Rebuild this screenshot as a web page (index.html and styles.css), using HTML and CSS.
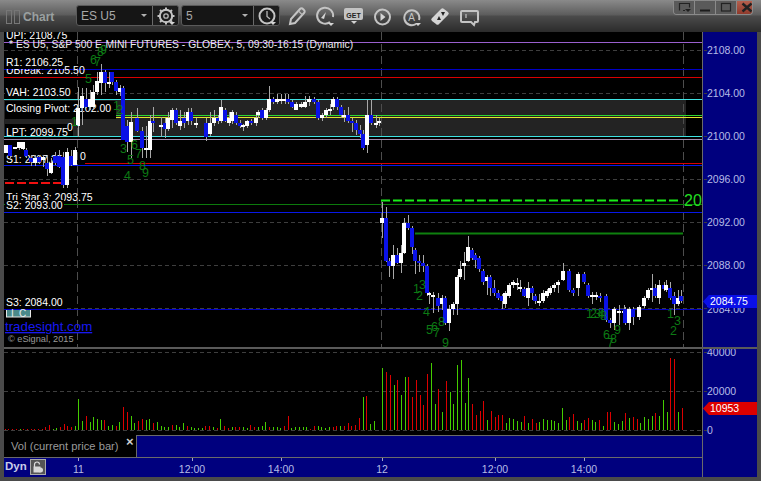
FILE: index.html
```html
<!DOCTYPE html>
<html lang="en">
<head>
<meta charset="utf-8">
<title>Chart</title>
<link rel="stylesheet" href="styles.css">
</head>
<body>
<div class="window">
  <header class="titlebar">
    <div class="brand">
      <span class="grip"></span><span class="grip"></span>
      <span class="brand-name">Chart</span>
    </div>
    <div class="combo combo-symbol">
      <span class="combo-value">ES U5</span><span class="caret"></span>
      <button class="combo-btn" type="button" aria-label="Settings">
        <svg width="24" height="20" viewBox="0 0 24 20"><circle cx="12" cy="10" r="6.2" class="ic-thick"/><circle cx="12" cy="10" r="2.2" class="ic"/><path d="M12 1.500v3M12 15.500v3M3.500 10h3M17.500 10h3M6 4l2 2M16 14l2 2M18 4l-2 2M8 14l-2 2" class="ic-thick"/><path d="M15 16h6l-3 3z" class="ic-fill"/></svg>
      </button>
    </div>
    <div class="combo combo-interval">
      <span class="combo-value">5</span><span class="caret"></span>
      <button class="combo-btn" type="button" aria-label="Interval">
        <svg width="24" height="20" viewBox="0 0 24 20"><circle cx="12" cy="10" r="7.500" class="ic-thick"/><path d="M12 5v5.500l3 2.500" class="ic"/><path d="M15 16h6l-3 3z" class="ic-fill"/></svg>
      </button>
    </div>
    <div class="tools">
      <svg class="tool" width="29" height="24" viewBox="0 0 29 24"><path d="M9 21l1-5L19 6a2 2 0 0 1 3 0l1 1a2 2 0 0 1 0 3L14 20z" class="ic-thick"/><path d="M17.500 8l4 4" class="ic"/></svg>
      <svg class="tool" width="29" height="24" viewBox="0 0 29 24"><path d="M20 19a8 8 0 1 1 3-5" class="ic-thick"/><path d="M11 15l5-6-2 7z" class="ic-fill"/><path d="M18 20h6l-3 3z" class="ic-fill"/></svg>
      <svg class="tool" width="29" height="24" viewBox="0 0 29 24"><rect x="5" y="5" width="19" height="12" rx="2" class="tool-get"/><text x="14.500" y="14.500" class="tool-get-text">GET</text><path d="M12 18h6l-3 3z" class="ic-fill"/></svg>
      <svg class="tool" width="29" height="24" viewBox="0 0 29 24"><circle cx="14.500" cy="14" r="7.500" class="ic-thick"/><path d="M12.500 10l5 4-5 4z" class="ic-fill"/></svg>
      <svg class="tool" width="29" height="24" viewBox="0 0 29 24"><path d="M19 21a7.500 7.500 0 1 1 3-4" class="ic-thick"/><text x="14.500" y="18" class="tool-a">A</text><path d="M18 20h6l-3 3z" class="ic-fill"/></svg>
      <svg class="tool" width="29" height="24" viewBox="0 0 29 24"><path d="M6 15l9-9a2 2 0 0 1 3 0l4 3a2 2 0 0 1 0 3l-9 9a2 2 0 0 1-3 0l-4-3a2 2 0 0 1 0-3z" class="ic-fill"/><path d="M11 17l2-4 2 4zM15 9h4l-2 4z" class="ic-dark"/></svg>
      <svg class="tool" width="29" height="24" viewBox="0 0 29 24"><path d="M7 8h15a1 1 0 0 1 1 1v9a1 1 0 0 1-1 1h-2l-1 3-3-3H7a1 1 0 0 1-1-1V9a1 1 0 0 1 1-1z" class="ic-thick"/><path d="M11 11v4" class="ic"/></svg>
    </div>
    <div class="winbtns">
      <span class="winbtn"><svg width="20" height="13" viewBox="0 0 20 13"><path d="M5.500 9.500v-7h10v4M9 9.500h2" class="ic-win"/><path d="M11 8h6l-3 3z" class="ic-fill"/></svg></span>
      <span class="winbtn"><svg width="20" height="13" viewBox="0 0 20 13"><path d="M5 9.500h10" class="ic-win-thick"/></svg></span>
      <span class="winbtn"><svg width="20" height="13" viewBox="0 0 20 13"><rect x="5.500" y="2.500" width="9" height="7.500" class="ic-win"/></svg></span>
      <span class="winbtn winbtn-close"><svg width="20" height="13" viewBox="0 0 20 13"><path d="M5.500 2.500l9 8M14.500 2.500l-9 8" class="ic-close"/></svg></span>
    </div>
  </header>

  <section class="pane">
    <svg class="chart chart-main" width="753" height="315" viewBox="4 32 753 315">
      <rect x="4" y="32" width="698" height="315" class="plot-bg"/>
      <rect x="702" y="32" width="55" height="315" class="axis-bg"/>
      <rect x="4" y="99" width="682" height="37" class="band"/>
      <g class="grid">
        <path d="M4 50.500H707M4 93.500H707M4 136.500H707M4 179.500H707M4 222.500H707M4 265.500H707M4 308.500H707"/>
      </g>
      <g class="vgrid"><path d="M77.500 32V347M381.500 32V347M683.500 32V347"/></g>
      <path d="M4 42.500H702" class="ln-purple"/>
      <path d="M4 69.500H702" class="ln-blue-dk"/>
      <path d="M4 77.500H702" class="ln-red"/>
      <path d="M4 99.500H702" class="ln-cyan"/>
      <path d="M116 115.500H702" class="ln-green"/>
      <path d="M116 117.500H702" class="ln-yellow"/>
      <path d="M4 136.500H702" class="ln-cyan"/>
      <path d="M4 139.500H702" class="ln-mauve"/>
      <path d="M85 163.500H702" class="ln-red"/>
      <path d="M4 165.500H702" class="ln-blue"/>
      <path d="M5 183H62" class="ln-red-dash"/>
      <path d="M4 204.500H702" class="ln-green-dk"/>
      <path d="M4 212.500H702" class="ln-blue"/>
      <path d="M381 200.500H680" class="ln-green-dash"/>
      <path d="M415 233.500H683" class="ln-green-thick"/>

      <g class="labels">
        <text x="6" y="39">UPI: 2108.75</text>
        <text x="9" y="48" class="title-text">* ES U5, S&amp;P 500 E-MINI FUTURES - GLOBEX, 5, 09:30-16:15 (Dynamic)</text>
        <text x="6" y="74">UBreak: 2105.50</text>
        <rect x="5" y="56" width="59" height="13" class="lbl-bg"/>
        <text x="6" y="66">R1: 2106.25</text>
        <rect x="5" y="87" width="70" height="12" class="lbl-bg"/>
        <text x="6" y="96">VAH: 2103.50</text>
        <rect x="5" y="101" width="111" height="18" class="lbl-bg"/>
        <text x="6" y="112">Closing Pivot: 2102.00</text>
        <rect x="5" y="124" width="68" height="12" class="lbl-bg"/>
        <text x="6" y="136">LPT: 2099.75</text>
        <text x="67" y="131">0</text>
        <text x="6" y="163">S1: 2097.25</text>
        <text x="80" y="160">0</text>
        <text x="6" y="201">Tri Star 3: 2093.75</text>
        <rect x="5" y="200" width="59" height="12" class="lbl-bg"/>
        <text x="6" y="209">S2: 2093.00</text>
      </g>

      <rect x="6.500" y="306" width="24" height="11" class="pc-box"/>
      <rect x="4" y="296" width="60" height="13" class="lbl-bg"/>
      <path d="M4 309.500H702" class="ln-blue-dk"/>
      <text x="6" y="306" class="lbl-late">S3: 2084.00</text>
      <text x="11" y="317" class="pc-text">I</text>
      <text x="19" y="317" class="pc-text">C</text>
      <text x="5" y="331" class="site">tradesight.com</text>
      <text x="8" y="342" class="copy">© eSignal, 2015</text>

      <g id="candles"></g>

      <g class="td">
        <text x="90" y="64">6</text><text x="94" y="66">7</text><text x="97" y="56">8</text><text x="100" y="54">9</text>
        <text x="85" y="83">5</text><text x="113" y="110">1</text><text x="116" y="114">2</text><text x="71" y="126">1</text>
        <text x="120" y="153">3</text><text x="131" y="149">6</text><text x="127" y="164">5</text><text x="135" y="158">7</text>
        <text x="139" y="170">8</text><text x="142" y="177">9</text><text x="124" y="180">4</text>
        <text x="419" y="289">3</text><text x="413" y="293">1</text><text x="416" y="300">2</text><text x="423" y="316">4</text>
        <text x="426" y="334">5</text><text x="431" y="331">6</text><text x="438" y="326">8</text><text x="433" y="337">7</text><text x="442" y="347">9</text>
        <text x="586" y="318">1</text><text x="590" y="318">2</text><text x="594" y="318">3</text><text x="598" y="318">4</text><text x="600" y="320">8</text>
        <text x="603" y="339">6</text><text x="610" y="343">8</text><text x="614" y="334">9</text><text x="607" y="347">7</text>
        <text x="667" y="318">1</text><text x="674" y="325">3</text><text x="670" y="335">2</text>
      </g>
      <text x="684" y="206" class="td-big">20</text>

      <g class="axis-text">
        <text x="707" y="54">2108.00</text><text x="707" y="97">2104.00</text><text x="707" y="140">2100.00</text>
        <text x="707" y="183">2096.00</text><text x="707" y="226">2092.00</text><text x="707" y="269">2088.00</text><text x="707" y="313">2084.00</text>
      </g>
      <path d="M703 301.500L709 295H757V308H709z" class="flag-blue"/>
      <text x="710" y="305" class="flag-text">2084.75</text>
      <path d="M702.500 32V347" class="axis-line"/>
    </svg>
  </section>

  <div class="separator"></div>

  <section class="pane">
    <svg class="chart chart-vol" width="753" height="86" viewBox="4 349 753 86">
      <rect x="4" y="349" width="698" height="86" class="plot-bg"/>
      <rect x="702" y="349" width="55" height="86" class="axis-bg"/>
      <g class="grid"><path d="M4 352.500H707M4 391.500H707M4 430.500H707"/></g>
      <g id="bars"></g>
      <g class="axis-text">
        <text x="707" y="356">40000</text><text x="707" y="395">20000</text><text x="707" y="434">0</text>
      </g>
      <path d="M703 408.500L709 402H757V415H709z" class="flag-red"/>
      <text x="710" y="412" class="flag-text">10953</text>
      <path d="M702.500 349V435" class="axis-line"/>
    </svg>
  </section>

  <div class="tabrow">
    <div class="tab">
      <span class="tab-label">Vol (current price bar)</span>
      <span class="tab-close">×</span>
    </div>
    <div class="tab-fill"></div>
    <div class="right-fill"></div>
  </div>

  <div class="timerow">
    <div class="timebar">
      <div class="dyn">
        <span class="dyn-label">Dyn</span>
        <span class="lock"><svg width="14" height="14" viewBox="0 0 14 14"><path d="M3.500 7V4.500a2.500 2.500 0 0 1 5 0" class="lock-ic"/><rect x="2.500" y="6.500" width="7" height="6" class="lock-fill"/><circle cx="9.500" cy="10" r="2.500" class="lock-fill"/></svg></span>
      </div>
      <svg class="chart" width="632" height="19" viewBox="70 458 632 19">
        <path d="M78.500 458v3M192.500 458v3M281.500 458v3M382.500 458v3M495.500 458v3M584.500 458v3" class="tick"/>
        <g class="time-text">
          <text x="78.500" y="473">11</text><text x="192" y="473">12:00</text><text x="281" y="473">14:00</text>
          <text x="382" y="473">12</text><text x="495" y="473">12:00</text><text x="584" y="473">14:00</text>
        </g>
      </svg>
    </div>
    <div class="right-fill"></div>
  </div>
</div>
<script src="script.js"></script>
</body>
</html>
```
FILE: styles.css
```css
* { box-sizing: border-box; }
html, body { margin: 0; padding: 0; background: #4a4a4a; }
.window {
  width: 761px; height: 481px; overflow: hidden;
  background: #4a4a4a;
  display: flex; flex-direction: column;
  font-family: "Liberation Sans", Arial, sans-serif;
}
.titlebar {
  flex: 0 0 32px; display: flex; align-items: flex-start;
  background: linear-gradient(#8a8a8a 0, #5c5c5c 15px, #4b4b4b 16px, #2b2b2b 32px);
}
.brand { width: 76px; height: 26px; display: flex; align-items: center; padding: 6px 0 0 6px; }
.grip { width: 6px; height: 14px; border: 1px solid #777; margin-right: 2px; margin-top: 2px; }
.brand-name { margin-left: 1px; margin-top: 2px; color: #9aa0a0; font-size: 12px; font-weight: bold; }
.combo {
  height: 21px; margin-top: 5px; background: #151515;
  border: 1px solid #5a5a5a; border-radius: 3px;
  display: flex; align-items: center;
}
.combo-symbol { width: 103px; margin-right: 2px; }
.combo-interval { width: 99px; }
.combo-value { color: #a8a8a8; font-size: 12px; padding-left: 4px; flex: 1; }
.caret { width: 0; height: 0; margin-right: 5px; border: 3px solid transparent; border-top: 3px solid #b0b0b0; border-bottom: 0; }
.combo-btn {
  width: 26px; height: 100%; padding: 0; border: 0; border-left: 1px solid #6a6a6a;
  background: #1c1c1c; display: flex; align-items: center; justify-content: center; border-radius: 0 3px 3px 0;
}
.ic { fill: none; stroke: #b8b8b8; stroke-width: 1.3; }
.ic-thick { fill: none; stroke: #c4c4c4; stroke-width: 2; }
.ic-fill { fill: #d4d4d4; }
.ic-dark { fill: #222; }
.tools { display: flex; margin-left: 1px; margin-top: 3px; }
.tool { display: block; flex: 0 0 29px; }
.tool-get { fill: #c4c4c4; }
.tool-get-text { fill: #222; font-size: 7px; font-weight: bold; text-anchor: middle; }
.tool-a { fill: #c4c4c4; font-size: 10px; text-anchor: middle; }
.winbtns {
  margin-left: auto; margin-right: 8px; margin-top: 1px; width: 80px; height: 14px;
  display: flex; border: 1px solid #8a8a8a; border-top: 0; border-radius: 0 0 4px 4px; overflow: hidden;
}
.winbtn { flex: 1; border-right: 1px solid #8a8a8a; background: #5a5a5a; display: flex; align-items: flex-start; justify-content: center; }
.winbtn-close { border-right: 0; background: linear-gradient(#b5604e, #8f3a2c); }
.ic-win { fill: none; stroke: #222; stroke-width: 1.2; }
.ic-win-thick { fill: none; stroke: #1d1d1d; stroke-width: 2; }
.ic-close { fill: none; stroke: #222; stroke-width: 2.4; }
.winbtn .ic-fill { fill: #1f1f1f; }

.pane { margin-left: 4px; display: flex; }
.chart { display: block; }
.chart text { font-family: "Liberation Sans", Arial, sans-serif; }
.separator { flex: 0 0 2px; background: #5a5a5a; margin: 0 4px; }
.plot-bg { fill: #000; }
.axis-bg { fill: #00007e; }
.band { fill: #232323; }
.grid path { fill: none; stroke: #3e3e3e; stroke-dasharray: 4 3; }
.vgrid path { fill: none; stroke: #4d4d4d; stroke-dasharray: 8 4; }
.ln-purple { stroke: #9a5fcf; fill: none; }
.ln-blue-dk { stroke: #0000c8; fill: none; }
.ln-blue { stroke: #0818e8; fill: none; }
.ln-red { stroke: #d80000; fill: none; }
.ln-cyan { stroke: #3fe3e3; fill: none; }
.ln-green { stroke: #30d830; fill: none; }
.ln-yellow { stroke: #e6e62c; fill: none; }
.ln-mauve { stroke: #a48cb0; fill: none; }
.ln-red-dash { stroke: #f01010; stroke-width: 2; fill: none; stroke-dasharray: 9 3; }
.ln-green-dk { stroke: #0c7a0c; fill: none; }
.ln-green-dash { stroke: #18ee18; stroke-width: 2; fill: none; stroke-dasharray: 9 3; }
.ln-green-thick { stroke: #0e800e; stroke-width: 2; fill: none; }
.labels text, .lbl-late { fill: #fff; font-size: 10.5px; }
.labels .title-text { font-size: 10.35px; fill: #eee; }
.lbl-bg { fill: #000; }
.pc-box { fill: #4a8a8a; stroke: #e6e6e6; stroke-width: 1; }
.pc-text { fill: #e8f0f0; font-size: 10px; }
.site { fill: #1818f0; font-size: 13.3px; text-decoration: underline; }
.copy { fill: #9a9a9a; font-size: 9.2px; }
.td text { fill: #0c7a14; font-size: 12.5px; }
.td-big { fill: #22dd22; font-size: 16px; }
.axis-text text { fill: #b6bce6; font-size: 10.5px; }
.flag-blue { fill: #0a10e8; }
.flag-red { fill: #dc0000; }
.flag-text { fill: #fff; font-size: 10.5px; }
.axis-line { stroke: #6a6a6a; fill: none; }

.tabrow { flex: 0 0 22px; display: flex; margin: 0 4px; }
.tab { width: 132px; background: #000; position: relative; display: flex; align-items: center; padding-left: 7px; }
.tab-label { color: #9a9a9a; font-size: 11.2px; }
.tab-close { position: absolute; left: 122px; top: 0; color: #cfcfcf; font-size: 13px; font-weight: bold; line-height: 13px; }
.tab-fill { flex: 1; background: #00007e; border-top: 1px solid #6a6a6a; border-left: 1px solid #6a6a6a; border-right: 1px solid #6a6a6a; }
.right-fill { flex: 0 0 54px; background: #00007e; }
.timerow { flex: 0 0 20px; display: flex; margin: 0 4px; }
.timebar { flex: 1; display: flex; background: #00007e; border-top: 1px solid #6a6a6a; border-right: 1px solid #6a6a6a; }
.dyn { flex: 0 0 66px; display: flex; align-items: flex-start; padding: 1px 0 0 1px; }
.dyn-label { color: #c8cce8; font-size: 11.5px; font-weight: bold; line-height: 15px; }
.lock { width: 16px; height: 16px; margin-left: 3px; background: #555; border: 1px solid #aaa; display: flex; }
.lock-ic { fill: none; stroke: #ddd; stroke-width: 1.2; }
.lock-fill { fill: #d8d8d8; }
.tick { stroke: #a0a4c8; fill: none; }
.time-text text { fill: #b6bce6; font-size: 10.5px; text-anchor: middle; }
.candle-up { fill: #fff; }
.candle-dn { fill: #0a12e6; }
.wick { fill: #a8a8a8; }
.vol-up { fill: #44cc00; }
.vol-dn { fill: #dc0000; }
```
FILE: script.js
```js
// x, colour (w/b), body top, body bottom, wick top, wick bottom
var candles = [
[4,'w',145,153,145,153],[8,'b',145,156,145,158],[13,'w',147,149,147,149],[17,'w',142,148,142,150],[21,'w',142,149,142,150],[24,'b',150,156,148,158],
[29,'b',158,162,155,166],[33,'w',158,163,155,166],[37,'b',157,162,155,164],[41,'w',157,160,155,167],[45,'b',163,169,155,176],[49,'w',163,173,158,174],[53,'b',156,163,152,165],[57,'b',156,167,150,168],
[61,'b',157,185,152,188],[65,'w',152,185,148,188],[69,'b',156,165,150,166],[73,'w',150,165,147,165],
[76,'w',108,126,87,137],[80,'w',96,108,88,125],[84,'b',99,107,88,108],[88,'w',99,107,90,110],[91,'w',92,107,85,110],[95,'w',81,92,72,95],[99,'w',72,83,64,95],[103,'b',72,83,70,92],[107,'w',82,84,72,88],[110,'b',72,82,72,85],[114,'b',82,91,80,95],[118,'w',88,92,85,96],
[121,'b',88,140,86,140],[125,'b',126,142,120,152],[129,'w',122,142,112,158],[135,'b',118,131,108,132],[140,'b',131,148,127,158],[144,'w',148,150,126,158],[148,'w',121,150,115,158],
[151,'b',121,123,107,132],[159,'w',125,127,117,137],[163,'b',123,129,118,138],[166,'w',118,129,112,131],[170,'w',110,120,108,128],[174,'b',110,123,108,125],[178,'w',121,126,110,130],[182,'b',118,123,112,128],[186,'w',112,121,108,125],[189,'b',112,121,108,125],[194,'w',123,124,118,128],
[204,'b',123,137,118,141],[208,'w',123,134,112,136],[212,'w',118,123,110,126],[216,'b',118,121,115,124],[219,'w',107,121,100,123],[223,'b',110,121,108,122],[227,'w',118,123,112,126],
[230,'w',112,121,110,124],[234,'b',115,123,112,125],[238,'b',123,126,120,128],[241,'w',125,127,124,131],[245,'w',121,126,120,128],[249,'b',121,123,119,125],[254,'w',118,123,112,126],[256,'w',112,115,110,118],[260,'b',110,118,108,120],[264,'w',110,118,108,120],
[267,'w',99,110,86,112],[271,'b',99,102,97,104],[275,'w',99,102,94,104],[279,'w',99,101,94,104],[283,'w',99,101,94,104],[286,'b',99,102,94,104],[290,'b',102,107,100,108],[294,'w',104,110,102,110],[299,'w',104,107,102,108],[303,'w',102,107,96,108],[307,'w',99,102,96,106],
[312,'b',99,102,97,104],[316,'b',102,118,100,120],[320,'w',115,118,113,121],[324,'w',110,115,108,118],[328,'w',109,111,104,115],[331,'w',99,107,97,110],[335,'b',99,107,97,110],[339,'b',107,115,105,118],[342,'w',115,117,110,122],[346,'b',115,121,107,123],[350,'b',121,123,118,132],[354,'b',123,130,120,135],[358,'b',130,134,125,138],
[361,'b',134,148,130,150],[365,'w',115,145,100,153],[369,'b',115,123,99,125],[374,'w',123,125,115,128],[377,'w',121,123,118,126],
[380,'w',218,223,202,238],[384,'b',218,261,207,262],[387,'b',261,266,258,277],[391,'w',255,266,245,279],[395,'b',255,263,248,264],[399,'w',253,263,245,273],[402,'w',223,253,218,254],[406,'b',223,228,215,230],[410,'b',228,247,226,254],[413,'b',250,261,248,274],[417,'b',261,263,255,272],[421,'b',263,266,255,272],
[425,'b',266,293,264,296],[427,'w',293,295,292,304],[431,'w',295,297,292,313],[436,'b',298,306,293,312],[440,'w',298,304,295,310],[443,'b',298,323,296,325],[447,'w',309,323,305,331],[451,'w',304,309,302,315],[455,'w',277,304,275,315],[458,'w',269,277,261,279],[462,'w',263,266,252,280],[466,'w',247,261,236,262],
[470,'b',250,258,248,260],[473,'b',255,260,253,268],[477,'b',258,269,256,272],[481,'b',271,282,269,285],[485,'w',277,281,275,295],[488,'b',277,288,275,296],[492,'b',288,293,280,296],[496,'b',293,298,290,300],[500,'b',296,301,294,309],[503,'w',293,304,291,308],[507,'w',285,296,283,298],[511,'w',282,285,280,288],[515,'w',283,285,278,290],[518,'w',287,289,280,292],
[522,'b',289,296,287,297],[526,'w',288,298,282,306],[530,'b',288,293,286,300],[533,'b',296,301,294,304],[537,'w',301,303,294,306],[541,'w',293,301,290,303],[545,'w',291,296,289,298],[548,'w',288,293,286,295],[552,'w',285,288,283,292],[556,'w',282,285,280,293],[561,'w',271,280,263,281],
[567,'b',271,290,269,292],[571,'b',290,293,288,296],[576,'w',274,288,272,296],[582,'b',274,282,272,284],[586,'b',285,296,283,298],[590,'w',295,297,292,304],[594,'w',295,297,292,300],[598,'b',296,298,293,302],
[604,'b',296,320,294,322],[608,'b',320,323,318,328],[612,'w',309,323,307,330],[617,'w',311,313,305,325],[622,'w',311,313,305,322],[623,'b',309,323,307,325],[627,'w',309,323,307,330],[631,'b',309,317,307,325],[637,'w',307,317,305,320],[642,'w',298,306,296,308],[646,'w',290,298,288,300],
[650,'w',288,290,274,302],[653,'b',288,296,284,298],[657,'w',285,298,280,304],[662,'b',285,289,282,291],[664,'w',285,290,280,292],[668,'b',288,298,282,300],[672,'b',296,304,292,315],[676,'w',298,304,290,306],[679,'b',296,301,290,303]
];
// signed heights: + green, - red
var pre = [-1,-1,-1,-1,1,-1,-1,-1,-1,-1,-1,-3,-5,1,2,-3,-6,-4,-3,4];
var day1 = [31,9,-14,8,13,11,10,-10,4,5,-4,8,-23,-18,14,7,-9,-11,10,11,-7,8,4,3,3,-5,5,3,7,-4,3,2,2,2,-4,-4,3,-2,11,-4,-2,3,-3,-3,3,2,-5,-3,3,
  4,8,-3,3,3,2,-4,-14,2,3,3,3,3,-1,-4,4,3,2,3,-3,-4,4,-4,-7,-4,-5,-12,33,-34,6,9];
var day2 = [62,-58,-55,45,-50,35,53,-53,-33,-50,-35,-25,-56,67,26,-41,18,-49,38,26,65,70,27,52,-26,-15,-19,-29,10,-19,-13,-15,-15,7,12,11,9,8,-14,7,-11,-7,8,11,10,10,9,7,22,10,-13,-16,9,7,-10,-12,10,8,-10,4,-18,-18,8,6,9,-17,12,-13,-11,7,13,11,14,-17,14,30,18,-72,-71,18,-22];

var NS = 'http://www.w3.org/2000/svg';
function rect(parent, x, y, w, h, cls) {
  var r = document.createElementNS(NS, 'rect');
  r.setAttribute('x', x); r.setAttribute('y', y);
  r.setAttribute('width', w); r.setAttribute('height', h);
  r.setAttribute('class', cls);
  r.setAttribute('shape-rendering', 'crispEdges');
  parent.appendChild(r);
}
var g = document.getElementById('candles');
candles.forEach(function (c) {
  rect(g, c[0] + 2, c[4], 1, c[5] - c[4], 'wick');
});
candles.forEach(function (c) {
  rect(g, c[0], c[2], 4, Math.max(2, c[3] - c[2]), c[1] === 'w' ? 'candle-up' : 'candle-dn');
});
var b = document.getElementById('bars');
function bars(list, start, step) {
  list.forEach(function (h, i) {
    rect(b, Math.round(start + i * step), 430 - Math.abs(h), 1, Math.abs(h), h > 0 ? 'vol-up' : 'vol-dn');
  });
}
bars(pre, 4.8, 3.68);
bars(day1, 78.3, 3.74);
bars(day2, 382.3, 3.74);
```
